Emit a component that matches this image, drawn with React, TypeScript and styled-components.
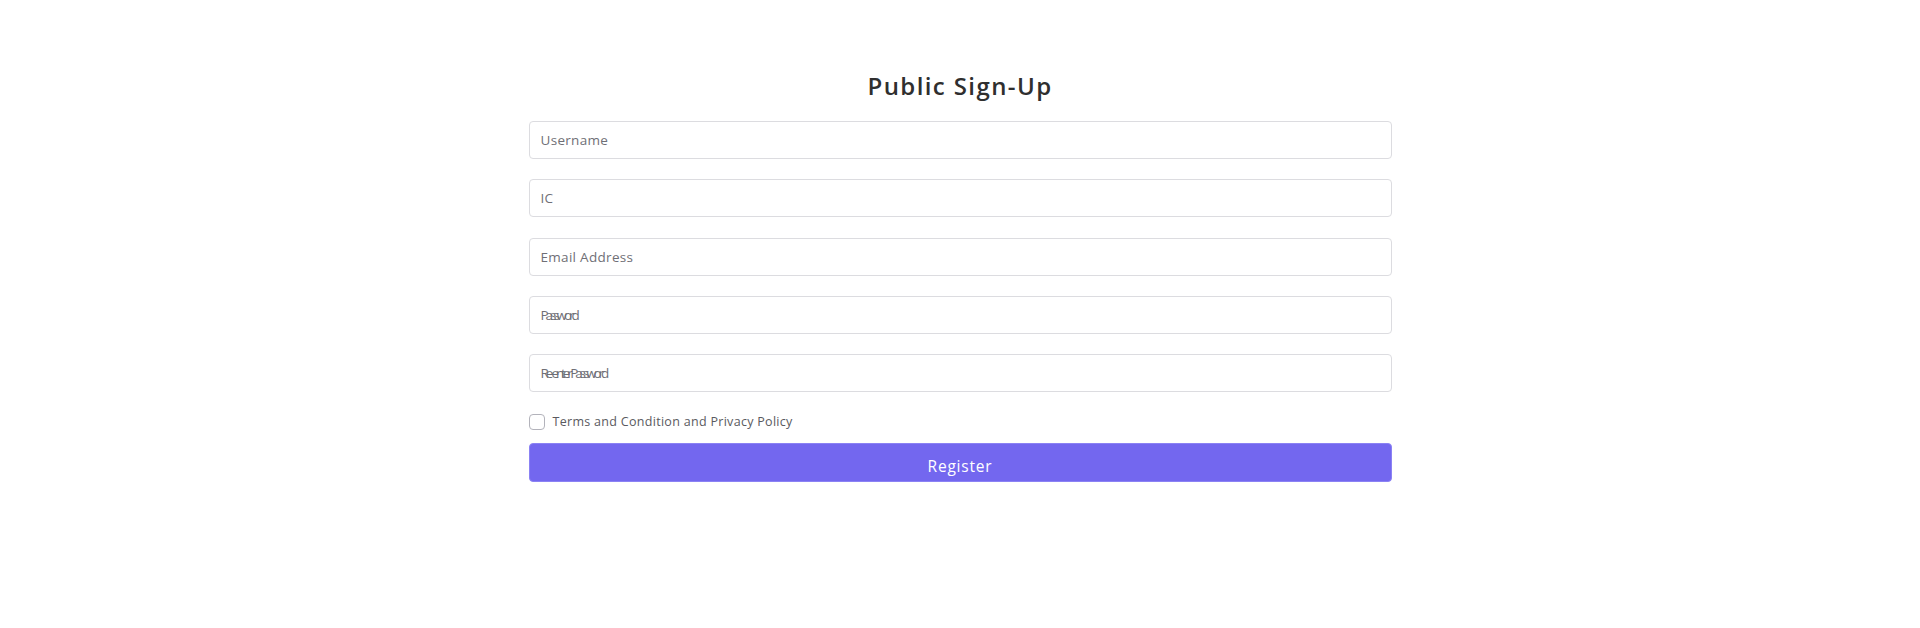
import React from "react";
import styled, { createGlobalStyle } from "styled-components";

const Global = createGlobalStyle`
  html, body { margin: 0; padding: 0; background: #fff; }
  body { font-family: "Open Sans", "Liberation Sans", sans-serif; }
  * { box-sizing: border-box; }
`;

const Page = styled.div`
  display: flex;
  justify-content: center;
  padding-top: 71px;
`;

const Card = styled.div`
  width: 863px;
  display: flex;
  flex-direction: column;
`;

const Title = styled.h1`
  margin: 0 0 20px;
  text-align: center;
  font-size: 24px;
  line-height: 30px;
  font-weight: 600;
  letter-spacing: 1.4px;
  color: #2f2f2f;
`;

const Form = styled.form`
  display: flex;
  flex-direction: column;
  gap: 20.3px;
`;

const Input = styled.input<{ $squeeze?: boolean }>`
  width: 100%;
  height: 38px;
  border: 1px solid #dcdce0;
  border-radius: 4px;
  padding: 0 11px;
  font-family: inherit;
  font-size: 13.5px;
  color: #333;
  outline: none;
  background: #fff;
  &::placeholder {
    color: #6f6f76;
    letter-spacing: ${(p) => (p.$squeeze ? "-3.1px" : "0.3px")};
  }
`;

const CheckRow = styled.label`
  display: flex;
  align-items: center;
  gap: 8px;
  margin-top: 1.5px;
  font-size: 12.5px;
  color: #5a5a60;
  letter-spacing: 0.3px;
  line-height: 16px;
`;

const Box = styled.span`
  width: 16px;
  height: 16px;
  border: 1px solid #b3b3bb;
  border-radius: 4px;
  background: #fff;
  flex: none;
`;

const Button = styled.button`
  margin-top: -7px;
  height: 39px;
  border: 1px solid #8b82f4;
  border-radius: 4px;
  background: #7367ef;
  color: #fff;
  font-family: inherit;
  font-size: 15.5px;
  font-weight: 500;
  letter-spacing: 0.8px;
  padding: 7px 0 0;
  cursor: pointer;
`;

export default function App() {
  return (
    <>
      <Global />
      <Page>
        <Card>
          <Title>Public Sign-Up</Title>
          <Form onSubmit={(e) => e.preventDefault()}>
            <Input placeholder="Username" />
            <Input placeholder="IC" />
            <Input placeholder="Email Address" />
            <Input type="password" $squeeze placeholder="Password" />
            <Input type="password" $squeeze placeholder="Re-enter Password" />
            <CheckRow>
              <Box />
              Terms and Condition and Privacy Policy
            </CheckRow>
            <Button type="submit">Register</Button>
          </Form>
        </Card>
      </Page>
    </>
  );
}
